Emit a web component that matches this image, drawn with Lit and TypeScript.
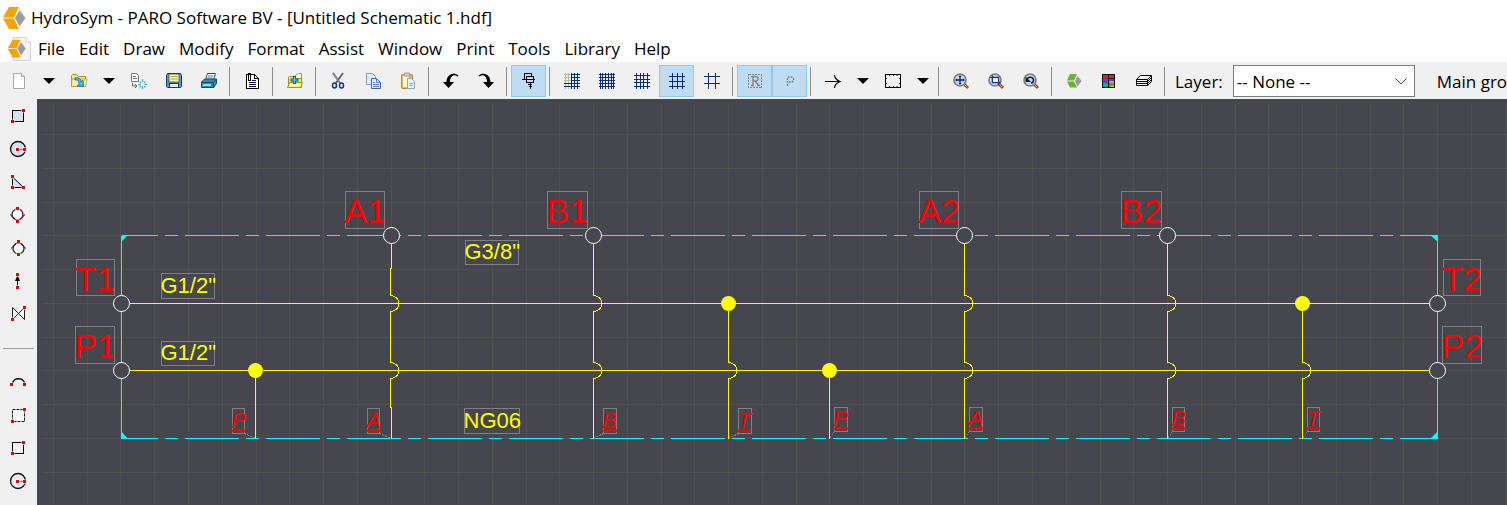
import { LitElement, html, svg, css } from "lit";
import { customElement, state } from "lit/decorators.js";

const red = (x: number, y: number) =>
  svg`<rect x=${x - 0.5} y=${y - 0.5} width="4" height="4" fill="#fff"/><rect x=${x} y=${y} width="3" height="3" fill="#e00000"/>`;

const gridIcon = (size: number, end: number, faint = false) => {
  const lines: number[] = [];
  for (let i = 0; i * size + 2 < end; i++) lines.push(i * size + 2);
  return svg`<g shape-rendering="crispEdges">
    ${lines.map((p, i) => svg`<path d=${`M${p + 0.5} 1v16`} stroke=${faint && i < 2 ? "#b9b9a8" : "#0a2a7a"}/>`)}
    ${lines.map((p, i) => svg`<path d=${`M${faint && i < 3 ? 8 : 1} ${p + 0.5}H17`} stroke="#0a2a7a"/>`)}
    ${faint ? lines.slice(0, 3).map((p) => svg`<path d=${`M1 ${p + 0.5}h7`} stroke="#b9b9a8"/>`) : ""}
  </g>`;
};

const lens = svg`<path d="M12 12l4 4" stroke="#a0522d" stroke-width="3"/><path d="M12 12l3 3" stroke="#f0a050" stroke-width="1"/><circle cx="8" cy="8" r="6" fill="#c3d6ec" stroke="#7c7c80" stroke-width="1.6"/>`;

const icons: Record<string, unknown> = {
  new: svg`<path d="M3.500 1.500h8l3 3v12h-11z" fill="#fff" stroke="#a8a8a8"/><path d="M11.500 1.500v3h3" fill="#eee" stroke="#a8a8a8"/>`,
  open: svg`<path d="M1.500 14.500v-11l1-1h4l2 2h7v9.500z" fill="#f5e37c" stroke="#a89238"/><path d="M2 7h15l-1.500 7.500h-14z" fill="#fbef9c" stroke="#b8a040" stroke-width=".8"/><path d="M5 6c4-1 6 1 6 4l2-2 .5 6.500-6.500-.5 2-1.500C9 9 7.500 7.500 5 8z" fill="#48b8e8" stroke="#14629c" stroke-width=".8"/>`,
  import: svg`<path d="M1.500 1.500h5l2 2v6h-7z" fill="#fff" stroke="#777"/><path d="M3 4.500h3M3 6.500h4" stroke="#777"/><path d="M2.500 11v3h4M5 12l2 2-2 2" fill="none" stroke="#666"/><path d="M12.500 7v3M12.500 14v3M8 12.500h3M14.500 12.500h3M9.500 9.500l1.500 1.500M15.500 9.500l-1.500 1.500M9.500 15.500l1.500-1.500M15.500 15.500l-1.500-1.500" stroke="#62b4dc" stroke-width="1.500"/>`,
  save: svg`<path d="M2.500 1.500h13l1 2v11l-1 1h-13l-1-1v-11z" fill="#5a96d2" stroke="#17375e"/><rect x="4" y="2" width="10" height="8" fill="#f7f0a0" stroke="#17375e" stroke-width=".6"/><path d="M5.500 4.500h7M5.500 7h7" stroke="#c0a838"/><rect x="4.500" y="11.500" width="9" height="4" fill="#e4eef6" stroke="#17375e"/>`,
  print: svg`<path d="M5.500 8l2-6.500h8l-2 6.500z" fill="#fff" stroke="#17556e"/><path d="M8 4h5M7.500 6h5" stroke="#288bb0"/><path d="M1.500 10l3-3h12v4.500l-3 4h-12z" fill="#2f8cb4" stroke="#164a66"/><path d="M1.500 10.500h12l3-3.500M13.500 10.500v5" fill="none" stroke="#164a66"/><path d="M3 13h8" stroke="#c8eaf6" stroke-width="1.500"/>`,
  notes: svg`<g shape-rendering="crispEdges"><path d="M3.500 2.500h8l4 4v10h-12z" fill="#fff" stroke="#000"/><path d="M11.500 2.500v4h4" fill="none" stroke="#000"/><path d="M9 8.500h4M6 10.500h7M6 12.500h7M6 14.500h7" stroke="#101050"/><path d="M5.500 1v7M7.500 1v7M5 1.500h3M5 8.500h3" stroke="#000"/></g>`,
  folderAdd: svg`<path d="M9.500 8V3.500l3-2h3v9" fill="#fffbd0" stroke="#b39c2c"/><path d="M2.500 15.500v-10l1-1h5l1 2h6v9z" fill="#f8e560" stroke="#a98f1f"/><path d="M1.500 15.500l2-5h13l-2 5z" fill="#fdf3a0" stroke="#a98f1f"/><path d="M8.500 4v8M4.500 8h8" stroke="#10608c" stroke-width="3"/><path d="M8.500 5v6M5.500 8h6" stroke="#54d2f0" stroke-width="1.200"/>`,
  cut: svg`<path d="M4 1l7 10M14 1l-7 10" stroke="#5b6677" stroke-width="2"/><path d="M4.500 1.500l6 9" stroke="#a7b4c6" stroke-width=".7"/><ellipse cx="5.500" cy="13.500" rx="2" ry="2.500" fill="none" stroke="#14388f" stroke-width="1.500"/><ellipse cx="12.500" cy="13.500" rx="2" ry="2.500" fill="none" stroke="#14388f" stroke-width="1.500"/>`,
  copy: svg`<path d="M2.500 1.500h6l3 3v8h-9z" fill="#e2edfa" stroke="#7ba0cc"/><path d="M7.500 6.500h5l4 4v6h-9z" fill="#dce9f8" stroke="#3a68a8"/><path d="M12.500 6.500v4h4M9 10.500h2M9 12.500h6M9 14.500h6" fill="none" stroke="#5b86bd"/>`,
  paste: svg`<rect x="2.500" y="2.500" width="11" height="14" rx="1.500" fill="#f0b850" stroke="#c08a38"/><rect x="4" y="4" width="6" height="11" fill="#fff8e0"/><rect x="5" y="1" width="6" height="3" rx="1" fill="#d8d4c8" stroke="#8d8878" stroke-width=".8"/><path d="M8.500 6.500h4l3 3v7h-7z" fill="#eaf2fc" stroke="#84a8d4"/><path d="M10 11.500h4M10 13.500h4" stroke="#8fb4de"/>`,
  undo: svg`<path d="M16 4C13 1.500 8 1.500 6.500 10" fill="none" stroke="#000" stroke-width="1.500"/><path d="M13 2C8 1 4.500 5 4.500 10H1l5.500 6L12 10H8c0-4 1.500-7 5-8z" fill="#000"/>`,
  redo: svg`<path d="M2 4C5 1.500 10 1.500 11.500 10" fill="none" stroke="#000" stroke-width="1.500"/><path d="M5 2c5-1 8.500 3 8.500 8H17l-5.500 6L6 10h4c0-4-1.500-7-5-8z" fill="#000"/>`,
  snap: svg`<g shape-rendering="crispEdges" fill="none" stroke="#000"><path d="M4.500 7.500v-6h7v3M2 7.500h13M6.500 4.500h7v6h-7zM10.500 10v7M8 12.500h4M9 14.500h3"/></g>`,
  grid1: gridIcon(3, 16, true),
  grid2: svg`<path d="M2.500 1v16M4.500 1v16M7.500 1v16M10.500 1v16M13.500 1v16M15.500 1v16M1 2.500h16M1 5.500h16M1 8.500h16M1 11.500h16M1 14.500h16" stroke="#0a2a7a" shape-rendering="crispEdges"/>`,
  grid3: svg`<path d="M3.500 1v16M7.500 1v16M10.500 1v16M14.500 1v16M1 3.500h16M1 7.500h16M1 10.500h16M1 14.500h16" stroke="#0a2a7a" shape-rendering="crispEdges"/>`,
  grid4: svg`<path d="M4.500 1v16M9.500 1v16M14.500 1v16M1 4.500h16M1 9.500h16M1 14.500h16" stroke="#0a2a7a" shape-rendering="crispEdges"/>`,
  grid5: svg`<path d="M5.500 1v16M12.500 1v16M1 4.500h16M1 11.500h16" stroke="#0a2a7a" shape-rendering="crispEdges"/>`,
  regionR: svg`<rect x="2.500" y="2.500" width="13" height="13" fill="none" stroke="#888" stroke-dasharray="2 1" shape-rendering="crispEdges"/><path d="M7 13.500V4.500h3.500l1.500 1.500v1.500L10.500 9H7.500M9.500 9l3 4.500M5 4.500h2M5 13.500h3M11 13.500h3" fill="none" stroke="#858585" stroke-width="1.500"/>`,
  regionP: svg`<path d="M6.500 14V5h4.500l1.500 1.500v2L11 10H6.500" fill="none" stroke="#888" stroke-width="1.500" stroke-dasharray="2 1"/>`,
  line: svg`<path d="M1 9.500h15M10.500 3c0 3 2 5 5.500 6.500-3.500 1.500-5.500 3.500-5.500 6.500" fill="none" stroke="#000" stroke-width="1.200"/>`,
  rect: svg`<path d="M1.500 2.500h15v13h-15z" fill="none" stroke="#000" shape-rendering="crispEdges"/><path d="M5.500 3v1M9.500 3v1M13 3v1M5.500 14v1M9.500 14v1M13 14v1M2 6.500h1M2 11.500h1M15 6.500h1M15 11.500h1" stroke="#333"/>`,
  zoomAll: svg`${lens}<path d="M8 4v8M4 8h8" stroke="#102a50" stroke-width="1.300"/><path d="M6.500 5L8 3l1.500 2zM6.500 11L8 13l1.500-2zM5 6.500L3 8l2 1.500zM11 6.500L13 8l-2 1.500z" fill="#102a50"/>`,
  zoomArea: svg`${lens}<path d="M3.500 5.500h8v8M5.500 3.500v7h8" fill="none" stroke="#14387c" stroke-width="1.300"/><rect x="6" y="6" width="5" height="4" fill="#e8f2fc"/>`,
  zoomBack: svg`${lens}<path d="M5 7c2-3 7-2 6.500 2-.5 1.500-1.500 2-2.500 2" fill="none" stroke="#101c38" stroke-width="1.500"/><path d="M3.500 4.500V10H9z" fill="#101c38"/>`,
  green: svg`<path d="M5 2h7L9 8.500H2z" fill="#65b32e"/><path d="M2 9.500h7l3 6H5z" fill="#65b32e"/><path d="M12.500 4l4 5-4 5.500-2.500-5.500z" fill="#9a9a9a"/>`,
  colors: svg`<g shape-rendering="crispEdges"><rect x="2" y="2" width="13" height="14" fill="#111"/><rect x="3" y="3" width="5" height="4" fill="#e8182c"/><rect x="9" y="3" width="5" height="3" fill="#e8182c"/><rect x="3" y="7" width="5" height="4" fill="#3c50d8"/><rect x="9" y="7" width="5" height="2" fill="#3c50d8"/><rect x="9" y="9" width="5" height="2" fill="#f08c50"/><rect x="3" y="11" width="5" height="4" fill="#20b050"/><rect x="9" y="11" width="2" height="4" fill="#20b050"/><rect x="11" y="11" width="3" height="3" fill="#b07848"/><rect x="11" y="14" width="3" height="1" fill="#f8e020"/></g>`,
  layers: svg`<path d="M1.500 7.500l4-4h11l-4 4zM1.500 7.500v6h11l4-4v-6M12.500 7.500v6M1.500 9.500h11l4-4M1.500 11.500h11l4-4" fill="#fff" stroke="#000"/>`,
  sRectFill: svg`<rect x="3.500" y="3.500" width="11" height="11" fill="#d5e1ee" stroke="#000"/>${red(13, 2)}${red(2, 13)}`,
  sCircleFill: svg`<circle cx="9" cy="9" r="7.500" fill="#d5e1ee" stroke="#111" stroke-width="1.300"/><path d="M9 9.500h6" stroke="#a06060"/>${red(7, 8)}${red(14, 8)}`,
  sTri: svg`<path d="M3.500 4v10.500h11z" fill="#d5e1ee" stroke="#000"/>${red(2, 2)}${red(2, 13)}${red(13, 13)}`,
  sPump: svg`<circle cx="8.500" cy="8.500" r="5.500" fill="#fff" stroke="#3a1048" stroke-width="1.300"/><path d="M1 8.500l7.500 7 7.500-7" fill="none" stroke="#3a1048"/>${red(7, 1)}${red(7, 14)}`,
  sPump2: svg`<circle cx="9.500" cy="9.500" r="5.500" fill="#fff" stroke="#222" stroke-width="1.300"/><path d="M2 9.500l7.500-7 7.500 7" fill="none" stroke="#222"/>${red(8, 1)}${red(8, 14)}`,
  sArrow: svg`<path d="M8.500 4v12" stroke="#000"/><path d="M8.500 3l2.500 6H6z" fill="#000"/>${red(7, 1)}${red(7, 14)}`,
  sValve: svg`<path d="M3.500 14.500v-12l12 12v-12z" fill="#fff" stroke="#222"/>${red(14, 1)}${red(2, 13)}`,
  sArc: svg`<path d="M3.500 11c0-7 12-7 12 0" fill="none" stroke="#000" stroke-width="1.300"/>${red(1, 10)}${red(14, 10)}`,
  sRectDash: svg`<rect x="3.500" y="3.500" width="12" height="12" fill="#f8f8f8" stroke="#111" stroke-dasharray="3 1"/>${red(14, 2)}${red(2, 14)}`,
  sRect: svg`<rect x="3.500" y="3.500" width="11" height="11" fill="#f4f4f4" stroke="#000"/>${red(13, 2)}${red(2, 13)}`,
  sCircle: svg`<circle cx="9" cy="9" r="7.500" fill="#e6ebf1" stroke="#111" stroke-width="1.300"/><path d="M9 9.500h6" stroke="#a06060"/>${red(7, 8)}${red(14, 8)}`,
};

const SEP = "|";
const DROP = "v";
const toolbar: [string, string][] = [
  ["new", "New"], [DROP, "New options"], ["open", "Open"], [DROP, "Recent files"], ["import", "Import"],
  ["save", "Save"], ["print", "Print"], [SEP, ""], ["notes", "Document notes"], [SEP, ""],
  ["folderAdd", "Add to folder"], [SEP, ""], ["cut", "Cut"], ["copy", "Copy"], ["paste", "Paste"], [SEP, ""],
  ["undo", "Undo"], ["redo", "Redo"], [SEP, ""], ["snap", "Snap to connections"], [SEP, ""],
  ["grid1", "Grid automatic"], ["grid2", "Grid finest"], ["grid3", "Grid fine"], ["grid4", "Grid normal"],
  ["grid5", "Grid coarse"], [SEP, ""], ["regionR", "Show regions"], ["regionP", "Show ports"], [SEP, ""],
  ["line", "Line"], [DROP, "Line styles"], ["rect", "Frame"], [DROP, "Frame styles"], [SEP, ""],
  ["zoomAll", "Zoom all"], ["zoomArea", "Zoom area"], ["zoomBack", "Zoom previous"], [SEP, ""],
  ["green", "Symbols"], ["colors", "Colours"], ["layers", "Layers"], [SEP, ""],
];
const sidebar: [string, string][] = [
  ["sRectFill", "Filled rectangle"], ["sCircleFill", "Filled circle"], ["sTri", "Triangle"],
  ["sPump", "Check valve down"], ["sPump2", "Check valve up"], ["sArrow", "Arrow"], ["sValve", "Valve"],
  [SEP, ""], ["sArc", "Arc"], ["sRectDash", "Dashed rectangle"], ["sRect", "Rectangle"], ["sCircle", "Circle"],
];
const menus = ["File", "Edit", "Draw", "Modify", "Format", "Assist", "Window", "Print", "Tools", "Library", "Help"];

const logo = (page: boolean) => html`<svg class="logo" viewBox="0 0 24 24" aria-hidden="true">
  ${page ? svg`<path d="M6 .5h13l4.500 4.500v18.500H6z" fill="#f4f4f4" stroke="#d2d2d2"/><path d="M19 .5V5h4.500" fill="#fff" stroke="#d2d2d2"/>` : ""}
  <g transform=${page ? "translate(0 2) scale(.8)" : ""}>
    <path d="M7 1h10l-5 10.500H1z" fill="#f5a30a"/><path d="M1 12.500h11L17 23H7z" fill="#f5a30a"/>
    <path d="M17.500 4l6 8-6 8.500-4.500-8.500z" fill="#9b9da0"/>
  </g></svg>`;

/* Schematic data, measured from the top left corner of the manifold block. */
const WIDTH = 1316, HEIGHT = 203, T_LINE = 68, P_LINE = 135;
const columns = [
  { x: 270, top: 8, hops: [T_LINE, P_LINE], jog: true },
  { x: 472, top: 8, hops: [T_LINE, P_LINE] },
  { x: 607, top: T_LINE, hops: [P_LINE] },
  { x: 843, top: 8, hops: [T_LINE, P_LINE] },
  { x: 1046, top: 8, hops: [T_LINE, P_LINE] },
  { x: 1181, top: T_LINE, hops: [P_LINE] },
  { x: 134, top: P_LINE, hops: [] },
  { x: 708, top: P_LINE, hops: [] },
];
const ports = [[270, 0], [472, 0], [843, 0], [1046, 0], [0, T_LINE], [0, P_LINE], [WIDTH, T_LINE], [WIDTH, P_LINE]];
const joints = [[134, P_LINE], [708, P_LINE], [607, T_LINE], [1181, T_LINE]];
const labels: [string, string, number, number, number, number, number][] = [
  ["port", "A1", 224, -44, 39, 37, -13], ["port", "B1", 426, -44, 40, 37, -13],
  ["port", "A2", 798, -44, 39, 37, -13], ["port", "B2", 1000, -44, 40, 37, -13],
  ["port", "T1", -45, 24, 38, 36, 55], ["port", "P1", -46, 91, 39, 37, 122],
  ["port", "T2", 1322, 24, 37, 36, 55], ["port", "P2", 1321, 91, 39, 37, 122],
  ["size", 'G1/2"', 40, 38, 53, 25, 57], ["size", 'G1/2"', 40, 106, 53, 24, 124],
  ["size", 'G3/8"', 344, 5, 53, 24, 23], ["size", "NG06", 343, 173, 55, 25, 192],
  ["pin", "P", 111, 173, 12, 25, 192], ["pin", "A", 246, 173, 12, 25, 192],
  ["pin", "B", 482, 173, 13, 25, 192], ["pin", "T", 617, 173, 13, 25, 192],
  ["pin", "P", 713, 172, 13, 24, 190], ["pin", "A", 848, 172, 13, 24, 190],
  ["pin", "B", 1051, 172, 12, 24, 190], ["pin", "T", 1186, 172, 12, 24, 190],
];
const leaders = "M123 198L134 203M258 198L270 203M482 198L472 203M617 198L607 203M713 196L708 203M848 196L843 203M1051 196L1046 203M1186 196L1181 203";

function columnPath(c: { x: number; top: number; hops: number[]; jog?: boolean }) {
  const x = c.jog ? c.x - 1 : c.x;
  let d = c.jog ? `M${c.x} ${c.top}V33H${x}` : `M${x} ${c.top}`;
  for (const y of c.hops) d += `V${y - 8}a8.500 8 0 0 1 0 16`;
  return d + (c.jog ? `V172H${c.x}V${HEIGHT}` : `V${HEIGHT}`);
}

@customElement("schematic-view")
class SchematicView extends LitElement {
  static styles = css`
    :host { display: block; overflow: hidden; background: #46464e; min-width: 0; }
    .sheet { display: block; width: 100%; height: 100%; }
    .grid { stroke: #50504e; }
    .grid, .wires, .block, .dash { fill: none; shape-rendering: crispEdges; }
    .wires { stroke: #ffff00; }
    .block, .dash { stroke: #00ffff; }
    .dash { stroke-dasharray: 54 7 13 7; stroke-dashoffset: 18; }
    .corner { fill: #00ffff; }
    .ring { fill: #46464e; stroke: #fff; }
    .joint { fill: #ffff00; }
    .box, .leader { fill: none; stroke: #808080; shape-rendering: crispEdges; }
    .leader { stroke-dasharray: 2 1; }
    text { font-family: "Liberation Sans", Arial, sans-serif; }
    .port { font-size: 34px; fill: #f00; }
    .size { font-size: 22px; fill: #ffff00; }
    .pin { font-size: 22px; fill: #f00; font-style: italic; text-decoration: underline; }
  `;
  render() {
    const vertical = Array.from({ length: 120 }, (_, k) => Math.ceil((k - 2) * 33.76 - 1));
    const horizontal = Array.from({ length: 60 }, (_, k) => Math.ceil((k - 3) * 33.75));
    return html`<svg class="sheet" role="img" aria-label="Hydraulic manifold schematic">
      <g transform="translate(84.5 136.5)">
        <path class="grid" d=${vertical.map((x) => `M${x} -132V2000`).join("") + horizontal.map((y) => `M-80 ${y}H4000`).join("")} />
        <path class="dash" d=${`M0 0H${WIDTH}`} /><path class="dash" d=${`M0 ${HEIGHT}H${WIDTH}`} />
        <path class="block" d=${`M0 0V${HEIGHT}M${WIDTH} 0V${HEIGHT}`} />
        <path class="corner" d=${`M0 0h6l-6 6zM${WIDTH} 0h-7l7 6zM0 ${HEIGHT}v-7l6 7zM${WIDTH} ${HEIGHT}v-7l-7 7z`} />
        <path class="wires" d=${`M0 ${T_LINE}H${WIDTH}M0 ${P_LINE}H${WIDTH}` + columns.map(columnPath).join("")} />
        ${ports.map(([x, y]) => svg`<circle class="ring" cx=${x} cy=${y} r="8"/>`)}
        ${joints.map(([x, y]) => svg`<circle class="joint" cx=${x} cy=${y} r="7.500"/>`)}
        <path class="leader" d=${leaders} />
        ${labels.map(([kind, text, x, y, w, h, base]) => svg`<rect class="box" x=${x} y=${y} width=${w} height=${h}/><text class=${kind} x=${x - 1} y=${base}>${text}</text>`)}
      </g>
    </svg>`;
  }
}

@customElement("app-root")
class AppRoot extends LitElement {
  @state() private active = new Set(["snap", "grid4", "regionR", "regionP"]);

  static styles = css`
    :host {
      display: flex; flex-direction: column; min-height: 100vh; overflow: hidden; background: #fff; color: #000;
      font-family: "Open Sans", "Segoe UI", sans-serif; font-size: 17px; line-height: 24px;
    }
    button, select { font: inherit; color: inherit; }
    button { border: 0; background: none; padding: 0; }
    .title { display: flex; align-items: center; gap: 5px; height: 35px; padding-left: 2px; white-space: nowrap; }
    .caption { margin: 0; font: inherit; }
    .logo { width: 24px; height: 24px; flex: none; }
    .menu { display: flex; align-items: center; gap: 7px; height: 27px; padding: 0 7px; white-space: nowrap; }
    .items { display: flex; gap: 14px; padding-top: 1px; }
    .toolbar {
      display: flex; align-items: center; height: 32px; padding: 3px 0 2px 1px; background: #f0f0f0;
      white-space: nowrap; overflow: hidden;
    }
    .tool { flex: none; display: grid; place-items: center; width: 35px; height: 32px; box-sizing: border-box; }
    .tool.drop { width: 25px; }
    .tool.on { background: #c0dcf3; border: 1px solid #90c8f6; }
    .icon { width: 18px; height: 18px; display: block; }
    .arrow { width: 12px; height: 6px; }
    .sep { flex: none; width: 1px; height: 29px; margin: 0 4px 0 3px; background: #8c8c8c; }
    .field { flex: none; margin: 0 10px 0 6px; }
    .field, .group { padding-top: 1px; }
    .combo { flex: none; display: grid; align-items: center; width: 182px; margin-right: 22px; }
    .combo > * { grid-area: 1 / 1; }
    .list {
      appearance: none; height: 32px; width: 100%; padding: 1px 0 0 3px; border: 1px solid #7a7a7a; border-radius: 0;
      background: #fff;
    }
    .chevron { justify-self: end; width: 12px; height: 7px; margin-right: 8px; pointer-events: none; }
    .work { flex: 1; display: flex; min-height: 406px; }
    .side { flex: none; width: 37px; background: #f0f0f0; }
    .side .tool { height: 33px; }
    .rule { height: 1px; margin: 18px 3px 16px; background: #a0a0a0; }
    schematic-view { flex: 1; }
  `;

  private toggle(name: string) {
    const next = new Set(this.active);
    if (!next.delete(name)) next.add(name);
    this.active = next;
  }

  private tool([name, label]: [string, string], vertical = false) {
    if (name === SEP) return html`<div class=${vertical ? "rule" : "sep"}></div>`;
    if (name === DROP)
      return html`<button class="tool drop" aria-label=${label}><svg class="arrow" viewBox="0 0 12 6"><path d="M0 0h12L6 6z"/></svg></button>`;
    return html`<button class=${this.active.has(name) ? "tool on" : "tool"} aria-label=${label} @click=${() => this.toggle(name)}>
      <svg class="icon" viewBox="0 0 18 18">${icons[name]}</svg></button>`;
  }

  render() {
    return html`
      <header class="title">${logo(false)}<h1 class="caption">HydroSym - PARO Software BV - [Untitled Schematic 1.hdf]</h1></header>
      <nav class="menu">${logo(true)}<div class="items">${menus.map((m) => html`<button>${m}</button>`)}</div></nav>
      <div class="toolbar">
        ${toolbar.map((t) => this.tool(t))}
        <label class="field" for="layer">Layer:</label>
        <div class="combo">
          <select class="list" id="layer"><option>-- None --</option></select>
          <svg class="chevron" viewBox="0 0 12 7" aria-hidden="true"><path d="M.5 .5L6 6L11.500 .5" fill="none" stroke="#444"/></svg>
        </div>
        <span class="group">Main group:</span>
      </div>
      <main class="work">
        <div class="side">${sidebar.map((t) => this.tool(t, true))}</div>
        <schematic-view></schematic-view>
      </main>`;
  }
}
